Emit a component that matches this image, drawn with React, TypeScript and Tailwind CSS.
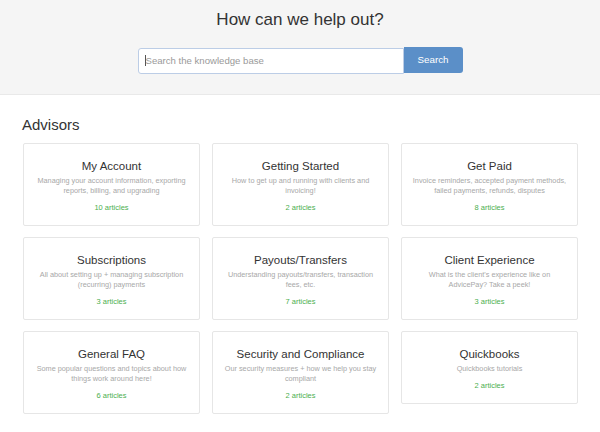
import { useState } from "react";

interface Category {
  title: string;
  description: string;
  count: number;
}

const categories: Category[] = [
  { title: "My Account", description: "Managing your account information, exporting reports, billing, and upgrading", count: 10 },
  { title: "Getting Started", description: "How to get up and running with clients and invoicing!", count: 2 },
  { title: "Get Paid", description: "Invoice reminders, accepted payment methods, failed payments, refunds, disputes", count: 8 },
  { title: "Subscriptions", description: "All about setting up + managing subscription (recurring) payments", count: 3 },
  { title: "Payouts/Transfers", description: "Understanding payouts/transfers, transaction fees, etc.", count: 7 },
  { title: "Client Experience", description: "What is the client's experience like on AdvicePay? Take a peek!", count: 3 },
  { title: "General FAQ", description: "Some popular questions and topics about how things work around here!", count: 6 },
  { title: "Security and Compliance", description: "Our security measures + how we help you stay compliant", count: 2 },
  { title: "Quickbooks", description: "Quickbooks tutorials", count: 2 },
];

function CategoryCard({ title, description, count }: Category) {
  return (
    <a
      href="#"
      className="block bg-white border border-[#e6e6e6] rounded-[2px] px-[7px] pt-[15px] pb-[12px] text-center"
    >
      <h3 className="text-[11.5px] leading-[14px] text-[#333]">{title}</h3>
      <p className="mt-[3px] text-[7.3px] leading-[10px] text-[#a8a8a8]">{description}</p>
      <p className="mt-[7px] text-[7.5px] leading-[10px] text-[#4caf50]">{count} articles</p>
    </a>
  );
}

export default function App() {
  const [query, setQuery] = useState("");

  return (
    <div className="min-h-[432px] bg-white font-['Liberation_Sans',Arial,sans-serif]">
      <div className="bg-[#f5f5f5] border-b border-[#e9e9e9] pt-[10px] pb-[20px]">
        <h1 className="text-center text-[17px] leading-[20px] text-[#333]">How can we help out?</h1>
        <form
          className="mt-[17px] flex justify-center"
          onSubmit={(e) => e.preventDefault()}
        >
          <div className="relative">
            <input
              value={query}
              onChange={(e) => setQuery(e.target.value)}
              placeholder="Search the knowledge base"
              className="w-[266px] h-[26px] bg-white border border-[#bccde6] rounded-l-[3px] pl-[7px] text-[9.6px] text-[#333] placeholder:text-[#9a9a9a] outline-none"
            />
            <span className="absolute left-[7px] top-[8px] h-[11px] w-px bg-[#555]" />
          </div>
          <button
            type="submit"
            className="w-[59px] h-[26px] bg-[#5b8fc8] rounded-r-[3px] text-white text-[9.8px]"
          >
            Search
          </button>
        </form>
      </div>

      <div className="px-[22px] pt-[21px] pb-4">
        <h2 className="text-[15px] leading-[18px] text-[#333]">Advisors</h2>
        <div className="mt-[9px] ml-px grid grid-cols-3 gap-x-3 gap-y-[11px] items-start">
          {categories.map((c) => (
            <CategoryCard key={c.title} {...c} />
          ))}
        </div>
      </div>
    </div>
  );
}
